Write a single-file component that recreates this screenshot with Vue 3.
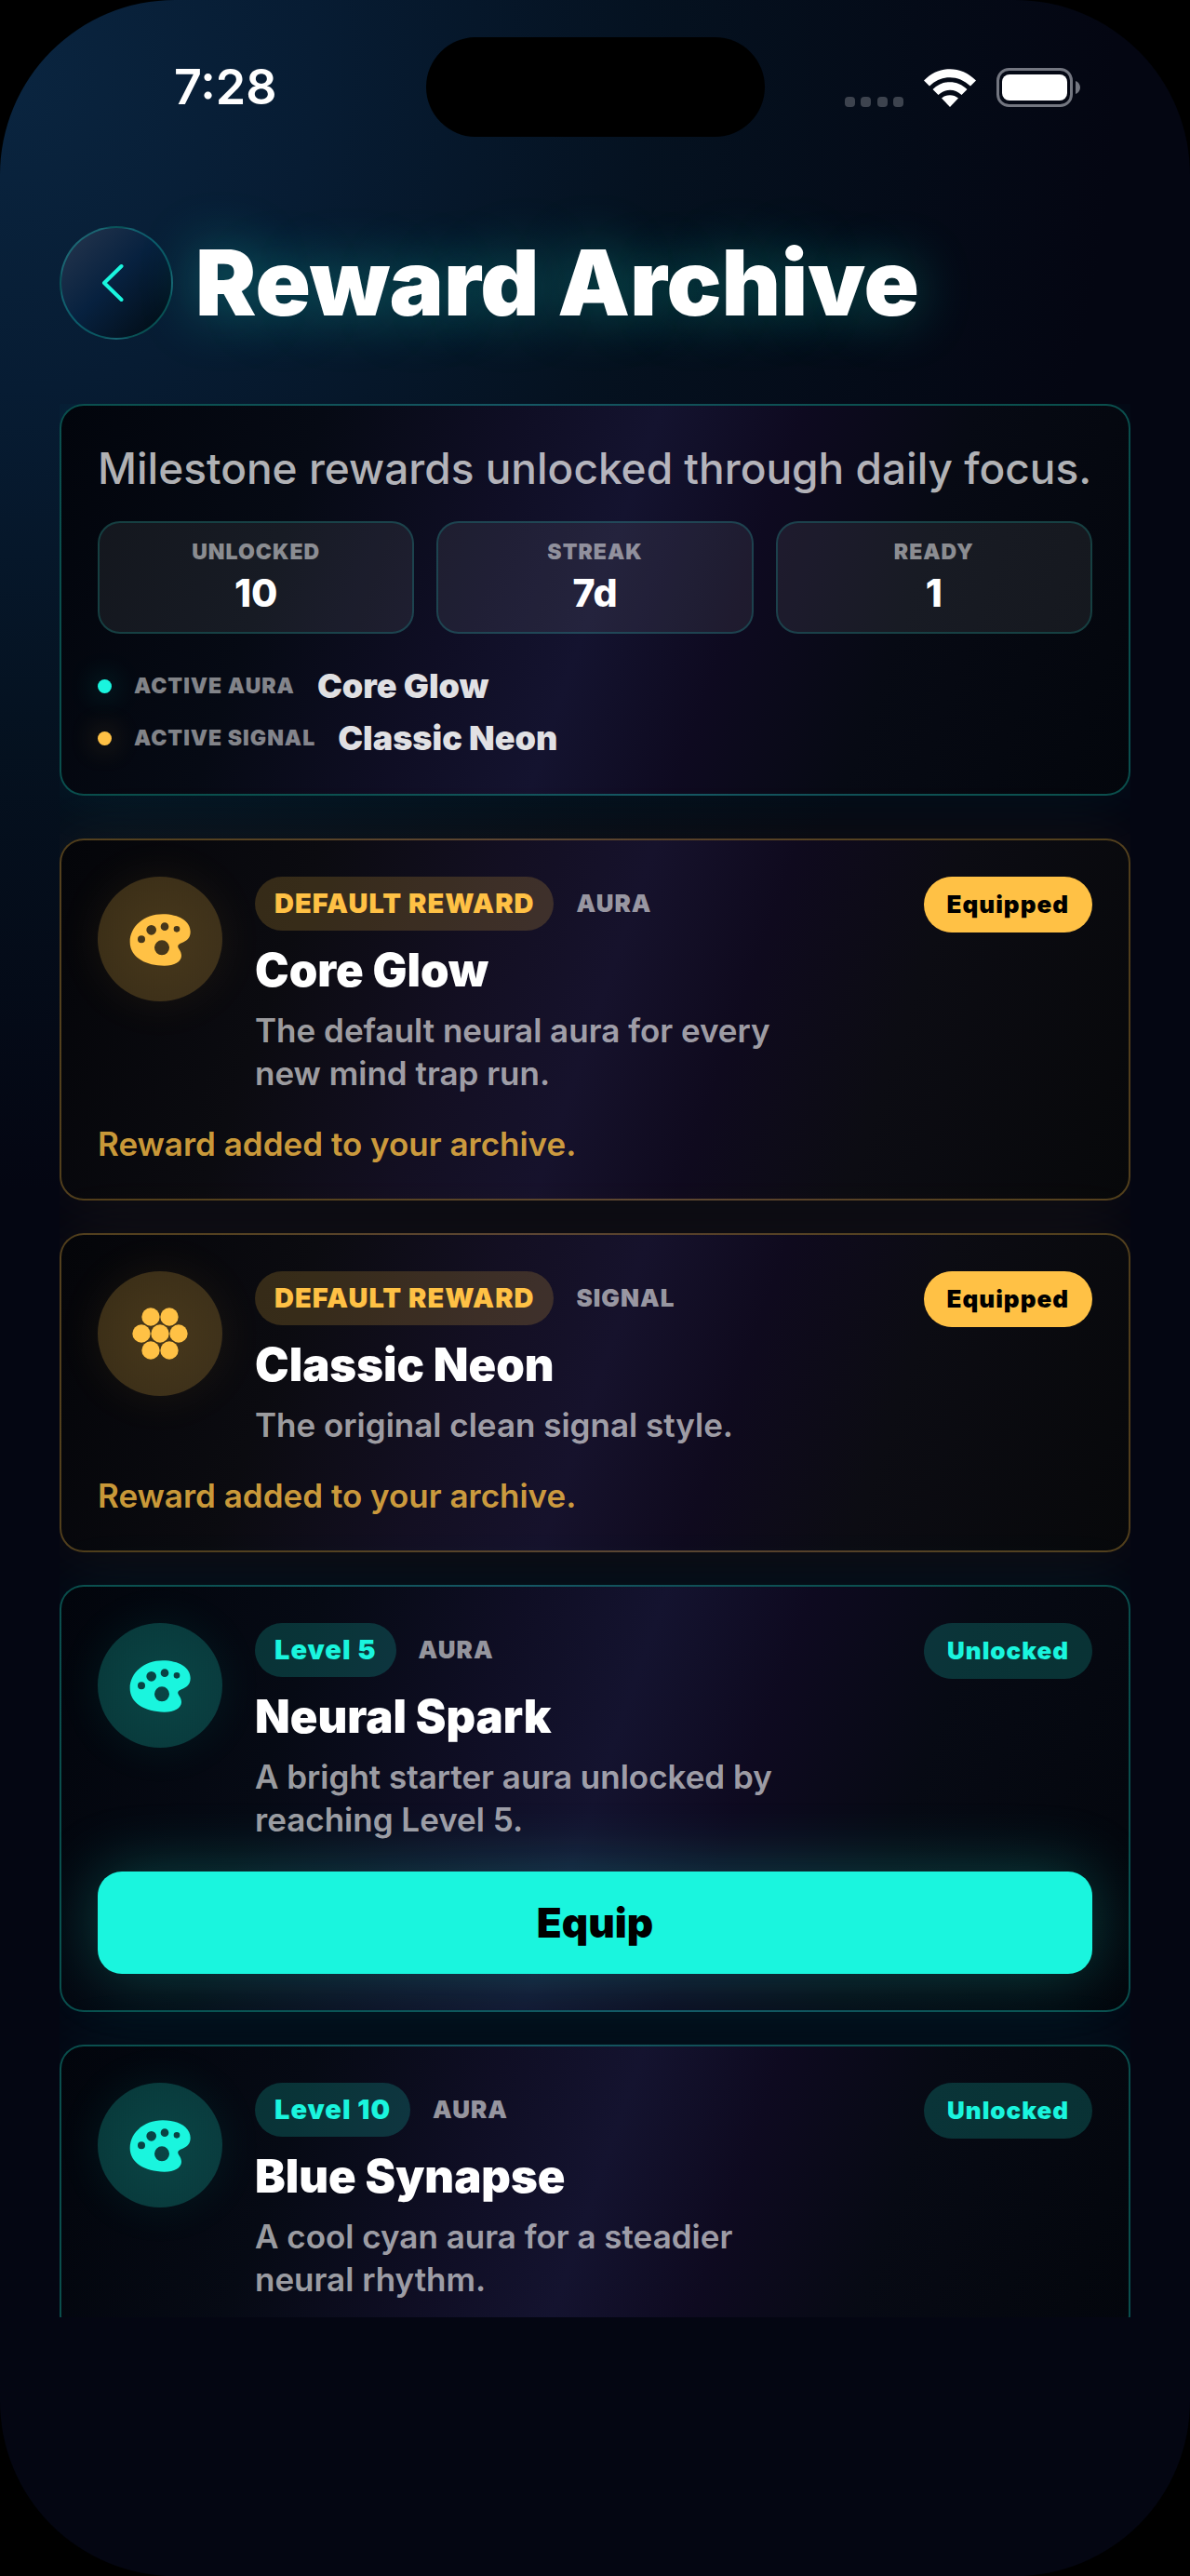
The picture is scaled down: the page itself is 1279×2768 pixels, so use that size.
<template>
  <div class="screen">
    <div class="status-bar">
      <span class="time">7:28</span>
      <span class="island"></span>
      <div class="indicators">
        <svg class="dots" viewBox="0 0 63 11" width="63" height="11">
          <rect v-for="x in [0, 17, 35, 52]" :key="x" :x="x" width="11" height="11" rx="4" />
        </svg>
        <svg class="wifi" viewBox="0 0 56 41" width="56" height="41">
          <path d="M0 12.500C16-4 40-4 56 12.500L50 18.500C37 6 19 6 6 18.500Z" />
          <path d="M9.500 22C20 11.500 36 11.500 46.500 22L40.500 28C33 21 23 21 15.500 28Z" />
          <path d="M19 31.500C24 27 32 27 37 31.500L28 41Z" />
        </svg>
        <svg class="battery" viewBox="0 0 90 42" width="90" height="42">
          <rect class="shell" x="1.500" y="1.500" width="79" height="39" rx="12" />
          <rect x="6" y="7" width="70" height="28" rx="8" />
          <path class="tip" d="M85 14C88 15 90 18 90 21C90 24 88 27 85 28Z" />
        </svg>
      </div>
    </div>

    <header class="header">
      <button class="back" aria-label="Back">
        <svg viewBox="0 0 24 42" width="24" height="42"><path d="M21.500 3L3 21L21.500 39" /></svg>
      </button>
      <h1>Reward Archive</h1>
    </header>

    <main class="content">
      <section class="card summary">
        <p class="intro">Milestone rewards unlocked through daily focus.</p>
        <div class="stats">
          <div v-for="stat in stats" :key="stat.label" class="stat">
            <span class="label">{{ stat.label }}</span>
            <span class="value">{{ stat.value }}</span>
          </div>
        </div>
        <div class="active-list">
          <div v-for="item in active" :key="item.label" :class="['active-row', item.tone]">
            <i class="dot"></i>
            <span class="label">{{ item.label }}</span>
            <span class="name">{{ item.name }}</span>
          </div>
        </div>
      </section>

      <article v-for="reward in rewards" :key="reward.title" :class="['card', 'reward', reward.equipped ? 'gold' : 'teal']">
        <div class="top">
          <div class="badge-icon">
            <svg v-if="reward.type === 'AURA'" viewBox="30 32 402 402">
              <path
                fill-rule="evenodd"
                d="M134 243C134 192 180 153 240 153C292 153 329 176 329 210C329 232 315 240 300 246C288 251 286 256 292 265C297 272 300 279 300 287C300 306 277 319 245 319C181 319 134 289 134 243Z
                M159 234a12 12 0 1 0 24 0a12 12 0 1 0-24 0Z
                M187 204a16 16 0 1 0 32 0a16 16 0 1 0-32 0Z
                M233 193a13 13 0 1 0 26 0a13 13 0 1 0-26 0Z
                M275 201a10 10 0 1 0 20 0a10 10 0 1 0-20 0Z
                M213 261a24 24 0 1 0 48 0a24 24 0 1 0-48 0Z"
              />
            </svg>
            <svg v-else viewBox="30 32 402 402">
              <circle v-for="(c, i) in cluster" :key="i" :cx="c[0]" :cy="c[1]" r="29" />
            </svg>
          </div>
          <div class="info">
            <div class="tags">
              <span class="pill">{{ reward.tag }}</span>
              <span class="type">{{ reward.type }}</span>
            </div>
            <h2>{{ reward.title }}</h2>
            <p>{{ reward.text }}</p>
          </div>
          <span class="state">{{ reward.equipped ? 'Equipped' : 'Unlocked' }}</span>
        </div>
        <p v-if="reward.equipped" class="note">Reward added to your archive.</p>
        <button v-if="reward.canEquip" class="equip">Equip</button>
      </article>
    </main>
  </div>
</template>

<script setup>
const stats = [
  { label: 'UNLOCKED', value: '10' },
  { label: 'STREAK', value: '7d' },
  { label: 'READY', value: '1' },
]

const active = [
  { label: 'ACTIVE AURA', name: 'Core Glow', tone: 'teal' },
  { label: 'ACTIVE SIGNAL', name: 'Classic Neon', tone: 'gold' },
]

const rewards = [
  { tag: 'DEFAULT REWARD', type: 'AURA', title: 'Core Glow', text: 'The default neural aura for every new mind trap run.', equipped: true },
  { tag: 'DEFAULT REWARD', type: 'SIGNAL', title: 'Classic Neon', text: 'The original clean signal style.', equipped: true },
  { tag: 'Level 5', type: 'AURA', title: 'Neural Spark', text: 'A bright starter aura unlocked by reaching Level 5.', canEquip: true },
  { tag: 'Level 10', type: 'AURA', title: 'Blue Synapse', text: 'A cool cyan aura for a steadier neural rhythm.' },
]

// seven dots packed as a hexagon
const cluster = [[201, 179], [261, 179], [171, 233], [231, 233], [291, 233], [201, 287], [261, 287]]
</script>

<style>
body {
  margin: 0;
  background: #000;
}
</style>

<style scoped>
.screen {
  --accent: #1af5de;
  --accent-rgb: 26, 245, 222;
  box-sizing: border-box;
  height: 100vh;
  padding-bottom: 278px;
  display: flex;
  flex-direction: column;
  overflow: hidden;
  border-radius: 188px;
  background:
    radial-gradient(circle at 0 80px, #0a2540 0, #071c33 340px, rgba(5, 21, 36, 0.75) 720px, rgba(4, 8, 18, 0) 1200px),
    #040612;
  color: #fff;
  font-family: Inter, "Noto Sans", sans-serif;
}

.gold {
  --accent: #ffc145;
  --accent-rgb: 255, 193, 69;
}

h1,
h2,
p {
  margin: 0;
}

button {
  font-family: inherit;
  cursor: pointer;
}

.status-bar {
  flex: none;
  display: grid;
  grid-template-columns: 1fr 364px 1fr;
  align-items: center;
  height: 107px;
  padding-top: 40px;
}

.island {
  height: 107px;
  border-radius: 54px;
  background: #000;
}

.time {
  padding-left: 187px;
  font-size: 52px;
  font-weight: 600;
}

.indicators {
  display: flex;
  justify-content: flex-end;
  align-items: flex-end;
  gap: 22px;
  padding-right: 118px;
  fill: #fff;
}

.dots {
  fill: #3d434e;
}

.shell {
  fill: none;
  stroke: #737680;
  stroke-width: 3;
}

.tip {
  fill: #737680;
}

.header {
  flex: none;
  display: flex;
  align-items: center;
  gap: 24px;
  padding: 96px 64px 69px;
}

.back {
  box-sizing: border-box;
  width: 122px;
  height: 122px;
  padding: 0 8px 0 0;
  display: flex;
  align-items: center;
  justify-content: center;
  border: 2px solid rgba(26, 245, 222, 0.28);
  border-radius: 50%;
  background: linear-gradient(135deg, #24344c 5%, #07213f 48%, #03101d 85%);
}

.back path {
  fill: none;
  stroke: var(--accent);
  stroke-width: 4;
  stroke-linecap: round;
  stroke-linejoin: round;
}

h1 {
  font-size: 98px;
  line-height: 116px;
  font-weight: 900;
  white-space: nowrap;
  text-shadow: 0 0 60px rgba(26, 245, 222, 0.35);
}

.content {
  flex: 1;
  min-height: 0;
  overflow: hidden;
  display: flex;
  flex-direction: column;
  gap: 35px;
  margin: 0 64px;
}

.card {
  box-sizing: border-box;
  flex: none;
  padding: 39px;
  border: 2px solid rgba(var(--accent-rgb), 0.3);
  border-radius: 26px;
  background: linear-gradient(109deg, #02050c 0%, #060a14 22%, #0f0e24 38%, #14132f 50%, #0e0a20 62%, #070a14 76%, #03060c 100%);
  box-shadow: 0 0 70px rgba(var(--accent-rgb), 0.07);
}

.summary {
  --accent-rgb: 26, 245, 222;
  margin-bottom: 11px;
}

.gold.card {
  background: linear-gradient(109deg, #040509 0%, #0b0b10 22%, #130f22 38%, #16122c 50%, #0f0a1e 62%, #0c0c13 76%, #07080a 100%);
}

.intro {
  font-size: 46px;
  line-height: 56px;
  font-weight: 500;
  color: rgba(255, 255, 255, 0.7);
}

.stats {
  display: grid;
  grid-template-columns: repeat(3, 1fr);
  gap: 24px;
  margin-top: 29px;
}

.stat {
  display: flex;
  flex-direction: column;
  align-items: center;
  gap: 5px;
  padding: 17px;
  border: 2px solid rgba(26, 245, 222, 0.18);
  border-radius: 24px;
  background: rgba(255, 255, 255, 0.07);
}

.label {
  font-size: 23px;
  line-height: 28px;
  font-weight: 900;
  letter-spacing: 1px;
  color: rgba(255, 255, 255, 0.5);
}

.value {
  font-size: 41px;
  line-height: 50px;
  font-weight: 800;
}

.active-list {
  display: flex;
  flex-direction: column;
  gap: 14px;
  margin-top: 35px;
}

.active-row {
  display: flex;
  align-items: center;
}

.dot {
  width: 15px;
  height: 15px;
  margin-right: 24px;
  border-radius: 50%;
  background: var(--accent);
  box-shadow: 0 0 30px rgba(var(--accent-rgb), 0.4);
}

.name {
  margin-left: 24px;
  font-size: 36px;
  line-height: 42px;
  font-weight: 900;
  color: rgba(255, 255, 255, 0.88);
}

.top {
  display: flex;
  align-items: flex-start;
}

.badge-icon {
  flex: none;
  width: 134px;
  height: 134px;
  border-radius: 50%;
  background: radial-gradient(circle, rgba(var(--accent-rgb), 0.26), rgba(var(--accent-rgb), 0.2));
  box-shadow: 0 0 50px rgba(var(--accent-rgb), 0.08);
}

.badge-icon svg {
  display: block;
  fill: var(--accent);
}

.info {
  flex: 1;
  min-width: 0;
  margin-left: 35px;
}

.tags {
  display: flex;
  align-items: center;
  gap: 24px;
}

.pill {
  padding: 0 21px;
  border-radius: 29px;
  background: rgba(var(--accent-rgb), 0.18);
  color: var(--accent);
  font-size: 29px;
  line-height: 58px;
  font-weight: 900;
  letter-spacing: 1px;
  white-space: nowrap;
}

.type {
  font-size: 26px;
  line-height: 32px;
  font-weight: 900;
  letter-spacing: 1px;
  color: rgba(255, 255, 255, 0.58);
}

h2 {
  margin-top: 14px;
  font-size: 49px;
  line-height: 58px;
  font-weight: 900;
}

.info p {
  max-width: 600px;
  margin-top: 12px;
  font-size: 35px;
  line-height: 46px;
  font-weight: 600;
  color: rgba(255, 255, 255, 0.62);
}

.state {
  flex: none;
  padding: 0 25px;
  border-radius: 30px;
  background: rgba(var(--accent-rgb), 0.18);
  color: var(--accent);
  font-size: 26px;
  line-height: 60px;
  font-weight: 900;
  letter-spacing: 1px;
}

.gold .state {
  background: var(--accent);
  color: #000;
}

.note {
  margin-top: 33px;
  font-size: 35px;
  line-height: 40px;
  font-weight: 600;
  color: rgba(255, 193, 69, 0.8);
}

.equip {
  display: block;
  width: 100%;
  height: 110px;
  margin-top: 33px;
  padding: 0;
  border: 0;
  border-radius: 26px;
  background: var(--accent);
  box-shadow: 0 0 70px rgba(26, 245, 222, 0.26);
  color: #000;
  font-size: 44px;
  font-weight: 900;
}
</style>
